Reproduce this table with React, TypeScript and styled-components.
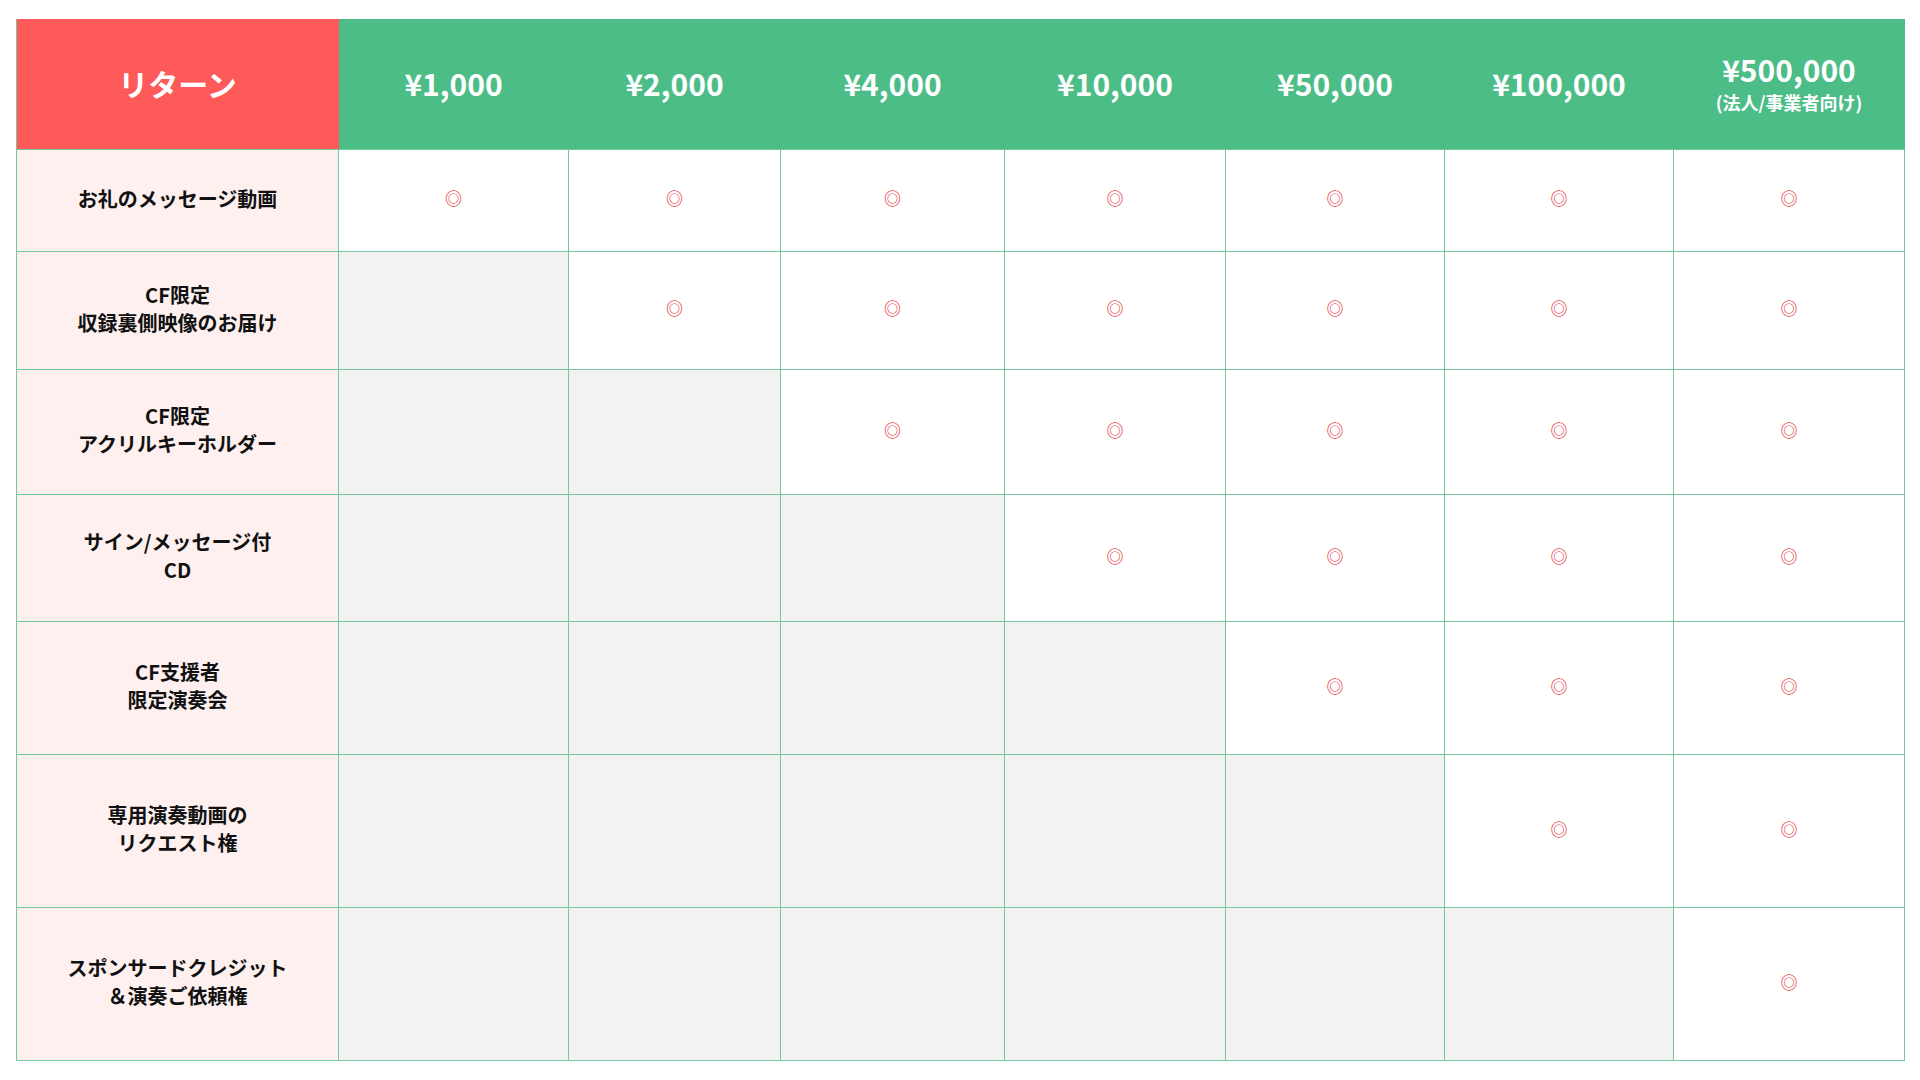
import React from "react";
import styled, { createGlobalStyle } from "styled-components";

const GlobalStyle = createGlobalStyle`
  html, body {
    margin: 0;
    padding: 0;
    background: #ffffff;
  }
  body {
    font-family: "Noto Sans CJK JP", "Noto Sans", sans-serif;
    color: #111111;
  }
`;

const prices = ["¥1,000", "¥2,000", "¥4,000", "¥10,000", "¥50,000", "¥100,000"];
const colWidths = [322, 230, 212, 224, 221, 219, 229, 231];

// each reward unlocks from a given tier onward
const rewards = [
  { lines: ["お礼のメッセージ動画"], from: 0, height: 102 },
  { lines: ["CF限定", "収録裏側映像のお届け"], from: 1, height: 118 },
  { lines: ["CF限定", "アクリルキーホルダー"], from: 2, height: 125 },
  { lines: ["サイン/メッセージ付", "CD"], from: 3, height: 127 },
  { lines: ["CF支援者", "限定演奏会"], from: 4, height: 133 },
  { lines: ["専用演奏動画の", "リクエスト権"], from: 5, height: 153 },
  { lines: ["スポンサードクレジット", "＆演奏ご依頼権"], from: 6, height: 153 },
];

const App = () => {
  return (
    <>
      <GlobalStyle />
      <Page>
        <Table>
          <colgroup>
            {colWidths.map((w, i) => (
              <Col key={i} $w={w} />
            ))}
          </colgroup>
          <thead>
            <Row $h={130}>
              <HeadCell $tone="red">リターン</HeadCell>
              {prices.map((p) => (
                <HeadCell key={p} $tone="green">
                  {p}
                </HeadCell>
              ))}
              <HeadCell $tone="green">
                <PriceTop>¥500,000</PriceTop>
                <PriceNote>(法人/事業者向け)</PriceNote>
              </HeadCell>
            </Row>
          </thead>
          <tbody>
            {rewards.map((r) => (
              <Row key={r.lines.join()} $h={r.height}>
                <LabelCell>
                  {r.lines.map((l) => (
                    <div key={l}>{l}</div>
                  ))}
                </LabelCell>
                {Array.from({ length: 7 }).map((_, i) => (
                  <MarkCell key={i} $on={i >= r.from}>
                    {i >= r.from && <Mark>◎</Mark>}
                  </MarkCell>
                ))}
              </Row>
            ))}
          </tbody>
        </Table>
      </Page>
    </>
  );
};

export default App;

const Page = styled.div`
  padding: 19px 16px 20px 16px;
`;

const Table = styled.table`
  width: 1888px;
  border-collapse: collapse;
  table-layout: fixed;
`;

const Col = styled.col<{ $w: number }>`
  width: ${(p) => p.$w}px;
`;

const Row = styled.tr<{ $h: number }>`
  height: ${(p) => p.$h}px;
`;

const HeadCell = styled.th<{ $tone: "red" | "green" }>`
  padding: 0 0 2px 0;
  background: ${(p) => (p.$tone === "red" ? "#ff5a5a" : "#4dbd88")};
  color: #ffffff;
  font-size: 30px;
  font-weight: 700;
  text-align: center;
  vertical-align: middle;
  border-bottom: 1px solid #74c89b;
  border-left: ${(p) => (p.$tone === "red" ? "1px solid #74c89b" : "none")};
  border-right: 1px solid ${(p) => (p.$tone === "red" ? "#ff5a5a" : "#4dbd88")};
`;

const PriceTop = styled.div`
  font-size: 30px;
  line-height: 32px;
`;

const PriceNote = styled.div`
  margin-top: 6px;
  font-size: 18px;
  line-height: 22px;
`;

const LabelCell = styled.td`
  padding: 0 8px 3px 8px;
  background: #fdf0ef;
  border: 1px solid #74c89b;
  text-align: center;
  vertical-align: middle;
  font-size: 20px;
  font-weight: 700;
  line-height: 28px;
  color: #111111;
`;

const MarkCell = styled.td<{ $on: boolean }>`
  padding: 0 0 4px 0;
  background: ${(p) => (p.$on ? "#ffffff" : "#f2f2f2")};
  border: 1px solid #74c89b;
  text-align: center;
  vertical-align: middle;
`;

const Mark = styled.span`
  color: #e64a4d;
  font-size: 17px;
  font-weight: 700;
  line-height: 1;
`;
